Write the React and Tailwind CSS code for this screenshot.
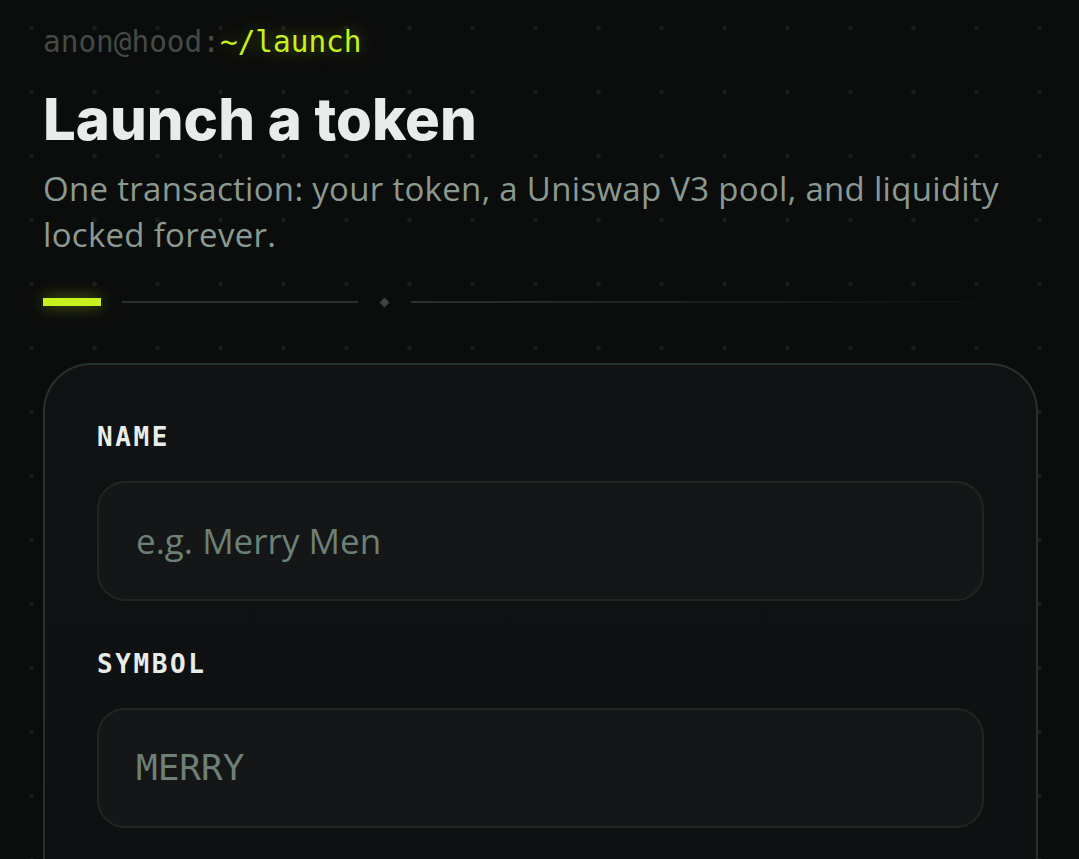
export default function App() {
  return (
    <div className="min-h-screen w-full overflow-hidden bg-[#0b0c0c] bg-[radial-gradient(circle,#1a1d1b_2px,transparent_2.6px)] bg-[size:63px_64px] bg-[position:0px_-4px]">
      <div className="px-[43px] pt-[22px]">
        <div className="font-['DejaVu_Sans_Mono',monospace] text-[29.4px] leading-[40px] text-[#434b46]">
          anon@hood:<span className="text-[#c6f01e] [text-shadow:0_0_18px_rgba(198,240,30,0.45)]">~/launch</span>
        </div>

        <h1 className="mt-[25px] font-['Inter',sans-serif] text-[58px] font-extrabold leading-[64px] tracking-[0px] text-[#e7ede9]">
          Launch a token
        </h1>

        <p className="mt-[15px] max-w-[1000px] font-['Open_Sans',sans-serif] text-[33px] leading-[46px] tracking-[0.3px] text-[#8b9a91]">
          One transaction: your token, a Uniswap V3 pool, and liquidity locked forever.
        </p>

        <div className="mt-[40px] flex items-center">
          <div className="h-[8px] w-[58px] bg-[#c6f01e] shadow-[0_0_16px_rgba(198,240,30,0.45)]" />
          <div className="ml-[21px] h-[2px] w-[236px] bg-[#29332e]" />
          <div className="mx-[23px] h-[7px] w-[7px] rotate-45 bg-[#3a453f]" />
          <div className="h-[2px] flex-1 bg-gradient-to-r from-[#29332e] to-transparent" />
        </div>

        <div className="mt-[57px] w-[995px] rounded-t-[48px] border-2 border-b-0 border-[#26332b] bg-gradient-to-b from-[#111214] to-[#0f1012] px-[52px] pt-[55px] pb-[60px]">
          <label className="block font-['DejaVu_Sans_Mono',monospace] text-[26px] font-bold leading-[34px] tracking-[2.6px] text-[#e8ede9]">
            NAME
          </label>
          <div className="mt-[27px] flex h-[120px] items-center rounded-[28px] border-2 border-[#1e2823] bg-[#151618] px-[37px]">
            <span className="font-['Open_Sans',sans-serif] text-[35px] text-[#6d8075]">e.g. Merry Men</span>
          </div>

          <label className="mt-[46px] block font-['DejaVu_Sans_Mono',monospace] text-[26px] font-bold leading-[34px] tracking-[2.6px] text-[#e8ede9]">
            SYMBOL
          </label>
          <div className="mt-[27px] flex h-[120px] items-center rounded-[28px] border-2 border-[#1e2823] bg-[#151618] px-[37px]">
            <span className="font-['DejaVu_Sans_Mono',monospace] text-[36px] text-[#6d8075]">MERRY</span>
          </div>
        </div>
      </div>
    </div>
  );
}
